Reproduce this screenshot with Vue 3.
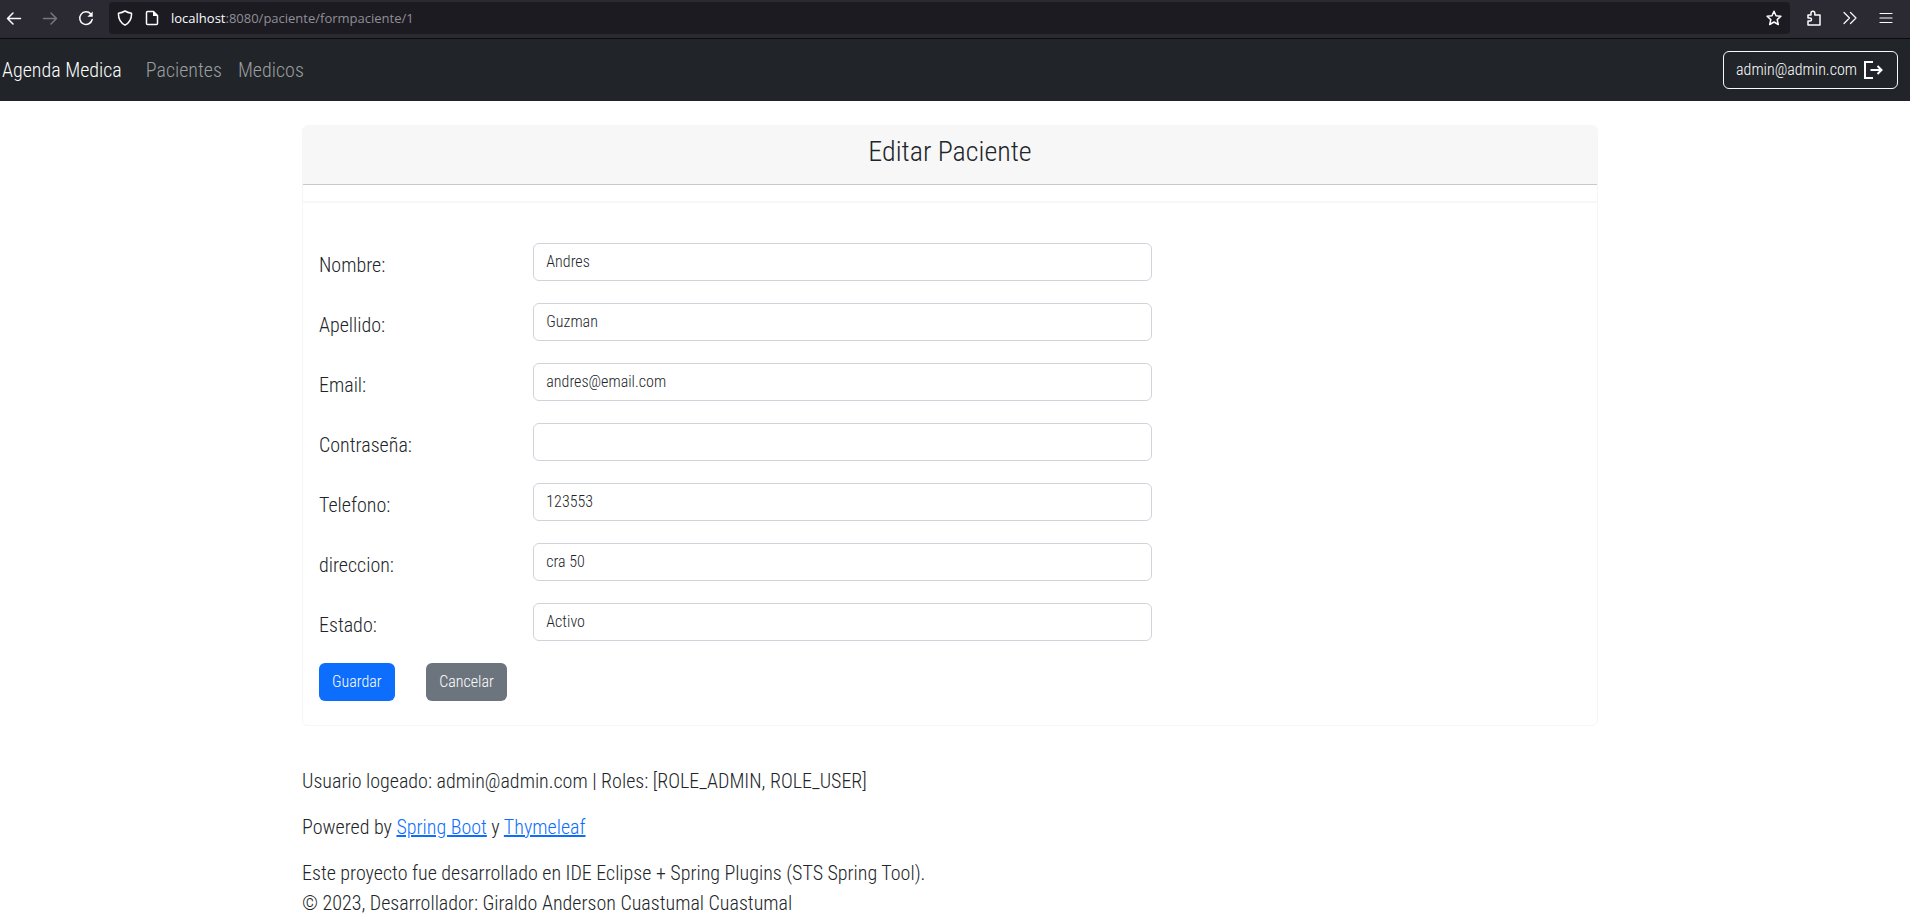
<script setup>
import { ref } from 'vue'

const fields = ref([
  { id: 'nombre', label: 'Nombre:', type: 'text', value: 'Andres' },
  { id: 'apellido', label: 'Apellido:', type: 'text', value: 'Guzman' },
  { id: 'email', label: 'Email:', type: 'email', value: 'andres@email.com' },
  { id: 'password', label: 'Contraseña:', type: 'password', value: '' },
  { id: 'telefono', label: 'Telefono:', type: 'text', value: '123553' },
  { id: 'direccion', label: 'direccion:', type: 'text', value: 'cra 50' },
  { id: 'estado', label: 'Estado:', type: 'text', value: 'Activo' },
])
const url = ref('/paciente/formpaciente/1')
</script>

<template>
  <div class="browser">
    <button class="tool" type="button" aria-label="Atrás">
      <svg viewBox="0 0 16 16"><path d="M14.500 8.500h-13M7 3 1.500 8.500 7 14" /></svg>
    </button>
    <button class="tool dim" type="button" aria-label="Adelante">
      <svg viewBox="0 0 16 16"><path d="M1.500 8.500h13M9 3l5.500 5.500L9 14" /></svg>
    </button>
    <button class="tool" type="button" aria-label="Recargar">
      <svg viewBox="0 0 16 16"><path d="M14.200 9.500A6.300 6.300 0 1 1 12.800 4" /><path class="solid" d="M14.700 1.500v5.300H9.400z" /></svg>
    </button>
    <div class="address">
      <svg viewBox="0 0 16 16"><path d="M8 1c2 1.300 4.300 1.900 6.500 2.200.3 4.800-1.500 9.300-6.500 12C3 12.500 1.200 8 1.500 3.200 3.700 2.900 6 2.300 8 1z" /></svg>
      <svg viewBox="0 0 16 16"><path d="M3.500 1.500h6l4 4v8a1 1 0 0 1-1 1h-9a1 1 0 0 1-1-1v-11a1 1 0 0 1 1-1z" /><path class="solid" d="M9 1v5h5z" /></svg>
      <span class="url"><b>localhost</b>:8080{{ url }}</span>
      <button class="tool" type="button" aria-label="Marcador">
        <svg viewBox="0 0 16 16"><path d="m8 1.300 2 4.500 4.900.5-3.700 3.300 1.100 4.900L8 12l-4.300 2.500 1.100-4.900L1.100 6.300 6 5.800z" /></svg>
      </button>
    </div>
    <button class="tool" type="button" aria-label="Extensiones">
      <svg viewBox="0 0 16 16"><path d="M2 15v-4h2a1.500 1.500 0 0 0 0-3H2V5h3V3.200a1.900 1.900 0 0 1 3.800 0V5H14v10z" /></svg>
    </button>
    <button class="tool" type="button" aria-label="Más herramientas">
      <svg class="thin" viewBox="0 0 16 16"><path d="m2 2.500 5.500 5.500L2 13.500M8.500 2.500 14 8l-5.500 5.500" /></svg>
    </button>
    <button class="tool" type="button" aria-label="Menú">
      <svg class="thin" viewBox="0 0 16 16"><path d="M2 3.500h12M2 8h12M2 12.500h12" /></svg>
    </button>
  </div>

  <nav class="navbar">
    <a class="brand" href="#">Agenda Medica</a>
    <a class="link" href="#">Pacientes</a>
    <a class="link" href="#">Medicos</a>
    <button class="btn logout" type="button">
      admin@admin.com
      <svg viewBox="0 0 24 24"><path d="M12 4H4v16h8M9.500 12H20M16.500 8l4 4-4 4" /></svg>
    </button>
  </nav>

  <main class="page">
    <div class="container">
      <section class="card">
        <h3 class="card-header">Editar Paciente</h3>
        <form class="card-body" @submit.prevent>
          <div v-for="field in fields" :key="field.id" class="row">
            <label :for="field.id">{{ field.label }}</label>
            <input :id="field.id" v-model="field.value" :type="field.type" autocomplete="off" />
          </div>
          <div class="row actions">
            <button class="btn primary" type="submit">Guardar</button>
            <button class="btn secondary" type="button">Cancelar</button>
          </div>
        </form>
      </section>
      <footer class="footer">
        <p>Usuario logeado: admin@admin.com | Roles: [ROLE_ADMIN, ROLE_USER]</p>
        <p>Powered by <a href="#">Spring Boot</a> y <a href="#">Thymeleaf</a></p>
        <p>Este proyecto fue desarrollado en IDE Eclipse + Spring Plugins (STS Spring Tool).<br />© 2023, Desarrollador: Giraldo Anderson Cuastumal Cuastumal</p>
      </footer>
    </div>
  </main>
</template>

<style>
body {
  margin: 0;
  background: #fff;
  color: #212529;
  font: 300 20px/30px "Roboto Condensed", Roboto, "Liberation Sans", sans-serif;
}
</style>

<style scoped>
* {
  box-sizing: border-box;
}
button,
input {
  font: inherit;
}
svg {
  flex: none;
  fill: none;
  stroke: currentColor;
}

.browser {
  display: flex;
  align-items: center;
  gap: 12px;
  height: 39px;
  padding: 0 12px 2px 2px;
  background: #2b2a33;
  border-bottom: 1px solid #0c0c0d;
  color: #fbfbfe;
}
.tool {
  display: grid;
  place-items: center;
  width: 24px;
  height: 24px;
  padding: 0;
  border: 0;
  background: none;
  color: inherit;
}
.tool svg,
.address svg {
  width: 16px;
  height: 16px;
  stroke-width: 1.5;
  stroke-linejoin: round;
  stroke-linecap: round;
}
.tool .thin {
  stroke-width: 1.2;
}
.solid {
  fill: currentColor;
  stroke: none;
}
.dim {
  color: #77767e;
}
.address {
  flex: 1;
  display: flex;
  align-items: center;
  gap: 11px;
  height: 32px;
  margin-left: -1px;
  padding: 0 4px 0 8px;
  border-radius: 4px;
  background: #1c1b22;
}
.url {
  flex: 1;
  color: #8f8f96;
  font: 13px/20px "Open Sans", "Noto Sans", sans-serif;
}
.url b {
  color: #fbfbfe;
  font-weight: 400;
}

.navbar {
  display: flex;
  align-items: center;
  gap: 16px;
  height: 62px;
  padding: 0 12px 0 2px;
  background: #212529;
}
.navbar a {
  text-decoration: none;
}
.brand {
  margin-right: 8px;
  color: #fff;
}
.link {
  color: #9b9d9f;
}
.btn {
  height: 38px;
  padding: 0 12px;
  border: 1px solid transparent;
  border-radius: 6px;
  color: #fff;
  font-size: 16px;
  line-height: 24px;
}
.logout {
  display: flex;
  align-items: center;
  gap: 4px;
  margin-left: auto;
  border-color: #f8f9fa;
  background: transparent;
}
.logout svg {
  width: 24px;
  height: 24px;
  stroke-width: 2;
}

.page {
  padding: 24px 10px 0 0;
}
.container {
  max-width: 1296px;
  margin: 0 auto;
}
.card {
  border: 1px solid #f6f6f6;
  border-radius: 6px;
}
.card-header {
  margin: 0 0 16px;
  padding: 8px 16px 14px;
  border-bottom: 1px solid #c8c8c8;
  border-radius: 5px 5px 0 0;
  background: #f7f7f7;
  font-size: 28px;
  font-weight: 300;
  line-height: 36px;
  text-align: center;
}
.card-body {
  padding: 40px 16px 24px;
  border-top: 2px solid #f7f7f7;
}
.row {
  display: grid;
  grid-template-columns: repeat(12, 1fr);
  column-gap: 24px;
  align-items: start;
  margin-bottom: 16px;
}
.row label {
  grid-column: span 2;
  padding: 7px 0;
}
.row input {
  grid-column: span 6;
  min-width: 0;
  height: 38px;
  padding: 0 12px 2px;
  border: 1px solid #ced4da;
  border-radius: 6px;
  background: #fff;
  color: #212529;
  font-size: 16px;
}
.actions {
  margin-bottom: 0;
}
.actions .btn {
  justify-self: start;
}
.primary {
  background: #0d6efd;
}
.secondary {
  background: #6c757d;
}

.footer {
  margin-top: 40px;
}
.footer p {
  margin: 0 0 16px;
}
.footer p:last-child {
  margin: 0;
}
.footer a {
  color: #0d6efd;
}
</style>
